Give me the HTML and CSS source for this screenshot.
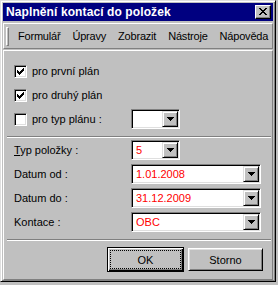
FILE: index.html
```html
<!DOCTYPE html>
<html lang="cs">
<head>
    <meta charset="UTF-8">
    <title>Naplnění kontací do položek</title>
    <link rel="stylesheet" href="styles.css">
</head>
<body>
    <div class="window">
        <div class="titlebar">
            <span class="title">Naplnění kontací do položek</span>
            <span class="close">
                <svg width="8" height="7" viewBox="0 0 8 7" shape-rendering="crispEdges"><path d="M0 0h2v1h-2zM6 0h2v1h-2zM1 1h2v1h-2zM5 1h2v1h-2zM2 2h4v1h-4zM3 3h2v1h-2zM2 4h4v1h-4zM1 5h2v1h-2zM5 5h2v1h-2zM0 6h2v1h-2zM6 6h2v1h-2z" fill="#000"/></svg>
            </span>
        </div>

        <div class="menubar">
            <span class="grip"></span>
            <span class="menu-item">Formulář</span>
            <span class="menu-item">Úpravy</span>
            <span class="menu-item">Zobrazit</span>
            <span class="menu-item">Nástroje</span>
            <span class="menu-item">Nápověda</span>
        </div>

        <div class="panel">
            <div class="rows checks">
                <label class="check"><span class="box checked"></span>pro první plán</label>
                <span></span>
                <label class="check"><span class="box checked"></span>pro druhý plán</label>
                <span></span>
                <label class="check"><span class="box"></span>pro typ plánu :</label>
                <div class="combo short"><span class="value"></span><span class="drop"></span></div>
            </div>

            <div class="separator"></div>

            <div class="rows fields">
                <span class="label"><u>T</u>yp položky :</span>
                <div class="combo short"><span class="value">5</span><span class="drop"></span></div>
                <span class="label">Datum od :</span>
                <div class="combo"><span class="value">1.01.2008</span><span class="drop"></span></div>
                <span class="label">Datum do :</span>
                <div class="combo"><span class="value">31.12.2009</span><span class="drop"></span></div>
                <span class="label">Kontace :</span>
                <div class="combo"><span class="value">OBC</span><span class="drop"></span></div>
            </div>

            <div class="separator"></div>

            <div class="buttons">
                <button class="btn default"><span class="focus">OK</span></button>
                <button class="btn">Storno</button>
            </div>
        </div>
    </div>

    <script>
        // šipky do rozbalovacích seznamů a fajfky do zaškrtávátek
        const arrow = '<svg width="7" height="4" viewBox="0 0 7 4" shape-rendering="crispEdges"><path d="M0 0h7v1h-7zM1 1h5v1h-5zM2 2h3v1h-3zM3 3h1v1h-1z" fill="#000"/></svg>';
        const tick = '<svg width="7" height="7" viewBox="0 0 7 7" shape-rendering="crispEdges"><path d="M0 2h1v3h-1zM1 3h1v3h-1zM2 4h1v3h-1zM3 3h1v3h-1zM4 2h1v3h-1zM5 1h1v3h-1zM6 0h1v3h-1z" fill="#000"/></svg>';
        document.querySelectorAll('.drop').forEach(el => el.innerHTML = arrow);
        document.querySelectorAll('.box.checked').forEach(el => el.innerHTML = tick);
    </script>
</body>
</html>
```

FILE: styles.css
```css
* {
    box-sizing: border-box;
}
body {
    margin: 0;
    background: #c0c0c0;
    font: 11px "Liberation Sans", Arial, sans-serif;
    color: #000;
}
.window {
    width: 276px;
    height: 282px;
    padding: 2px;
    border: 1px solid;
    border-color: #dfdfdf #000 #000 #dfdfdf;
    box-shadow: inset 1px 1px #fff, inset -1px -1px #808080;
}
.titlebar {
    height: 18px;
    background: #000080;
    display: flex;
    align-items: center;
    justify-content: space-between;
    padding: 0 2px 0 3px;
}
.title {
    color: #fff;
    font-weight: bold;
    font-size: 12px;
    letter-spacing: 0.1px;
}
.close {
    width: 16px;
    height: 14px;
    background: #c0c0c0;
    border: 1px solid;
    border-color: #fff #000 #000 #fff;
    box-shadow: inset -1px -1px #808080;
    display: flex;
    align-items: center;
    justify-content: center;
    padding-bottom: 1px;
}
.menubar {
    margin-top: 2px;
    height: 26px;
    border: 1px solid;
    border-color: #fff #808080 #808080 #fff;
    display: flex;
    align-items: center;
    gap: 12px;
    padding-left: 2px;
    overflow: hidden;
}
.menu-item {
    letter-spacing: -0.2px;
    white-space: nowrap;
}
.grip {
    width: 3px;
    height: 19px;
    border-left: 1px solid #fff;
    border-top: 1px solid #fff;
    border-right: 1px solid #808080;
    border-bottom: 1px solid #808080;
    margin-right: -3px;
}
.panel {
    margin-top: 1px;
    height: 230px;
    border: 1px solid;
    border-color: #fff #808080 #808080 #fff;
}
.rows {
    display: grid;
    grid-template-columns: 117px auto;
    grid-auto-rows: 24px;
    align-items: center;
    padding-left: 10px;
}
.checks {
    padding-top: 8px;
}
.check {
    display: flex;
    align-items: center;
    gap: 5px;
}
.box {
    width: 13px;
    height: 13px;
    background: #fff;
    border: 1px solid;
    border-color: #808080 #fff #fff #808080;
    box-shadow: inset 1px 1px #000, inset -1px -1px #dfdfdf;
    padding: 2px;
    display: flex;
}
.separator {
    margin: 5px 1px 0 3px;
    border-top: 1px solid #808080;
    border-bottom: 1px solid #fff;
}
.combo {
    width: 130px;
    height: 20px;
    background: #fff;
    border: 1px solid;
    border-color: #808080 #fff #fff #808080;
    box-shadow: inset 1px 1px #000, inset -1px -1px #dfdfdf;
    padding: 1px;
    display: flex;
}
.combo.short {
    width: 49px;
}
.value {
    flex: 1;
    color: #f00;
    padding-left: 3px;
    line-height: 16px;
}
.drop {
    width: 16px;
    height: 16px;
    background: #c0c0c0;
    border: 1px solid;
    border-color: #dfdfdf #000 #000 #dfdfdf;
    box-shadow: inset 1px 1px #fff, inset -1px -1px #808080;
    display: flex;
    align-items: center;
    justify-content: center;
}
.buttons {
    margin-top: 6px;
    display: flex;
    justify-content: flex-end;
    align-items: center;
    gap: 4px;
    padding-right: 9px;
}
.btn {
    width: 75px;
    height: 23px;
    background: #c0c0c0;
    font: inherit;
    color: #000;
    padding: 0;
    border: 1px solid;
    border-color: #fff #000 #000 #fff;
    box-shadow: inset 1px 1px #dfdfdf, inset -1px -1px #808080;
}
.btn.default {
    width: 77px;
    height: 25px;
    border-color: #000;
    box-shadow: inset 1px 1px #fff, inset -1px -1px #000, inset -2px -2px #808080;
    padding: 3px;
}
.focus {
    display: flex;
    align-items: center;
    justify-content: center;
    height: 100%;
    outline: 1px dotted #000;
}
```
